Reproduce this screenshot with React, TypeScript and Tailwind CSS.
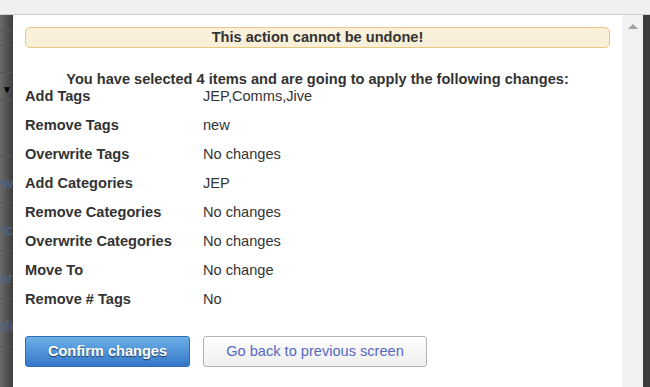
import React from "react";

const rows = [
  { label: "Add Tags", value: "JEP,Comms,Jive" },
  { label: "Remove Tags", value: "new" },
  { label: "Overwrite Tags", value: "No changes" },
  { label: "Add Categories", value: "JEP" },
  { label: "Remove Categories", value: "No changes" },
  { label: "Overwrite Categories", value: "No changes" },
  { label: "Move To", value: "No change" },
  { label: "Remove # Tags", value: "No" },
];

// slices of the page that peek out behind the dialog
const behind = [
  { h: "h-[16px]", text: "" },
  { h: "h-[15px]", text: "" },
  { h: "h-[27px]", text: "" },
  { h: "h-[28px]", text: "▼" },
  { h: "h-[56px]", text: "" },
  { h: "h-[46px]", text: "ew" },
  { h: "h-[48px]", text: "nc" },
  { h: "h-[48px]", text: "ar" },
  { h: "h-[48px]", text: "oli" },
];

const App = () => {
  return (
    <div
      className="w-[650px] h-[387px] overflow-hidden flex flex-col bg-[#f0f0f0] text-[#333333]"
      style={{ fontFamily: '"Liberation Sans", Arial, sans-serif' }}
    >
      {/* page top strip */}
      <div className="h-[15px] shrink-0 bg-[#f0f0f0] border-b border-[#cfcfcf]" />

      <div className="flex flex-1 min-h-0">
        {/* dimmed page behind the dialog */}
        <div className="w-[13px] shrink-0 overflow-hidden flex flex-col bg-gradient-to-r from-[#6b6b6b] to-[#3e3e3e] text-[15px] text-[#4d6590]">
          {behind.map((b, i) => (
            <div
              key={i}
              className={`${b.h} shrink-0 border-b border-[#555] flex items-center justify-end whitespace-nowrap`}
            >
              {b.text === "▼" ? (
                <span className="text-[10px] text-black pr-[1px] pt-[5px]">▼</span>
              ) : (
                <span className="pt-[8px]">{b.text}</span>
              )}
            </div>
          ))}
        </div>

        {/* dialog */}
        <div className="flex-1 flex bg-white rounded-tl-[7px] min-w-0">
          <div className="flex-1 px-[12px] pt-[12px] text-[14.6px]">
            <div className="h-[21px] flex items-center justify-center rounded-[5px] border border-[#e9c77f] bg-[#f8f0d9] font-bold">
              This action cannot be undone!
            </div>

            <div className="mt-[23px] mb-[1px] leading-[16px] text-center font-bold">
              You have selected 4 items and are going to apply the following changes:
            </div>

            <div className="flex flex-col gap-[13px]">
              {rows.map((r) => (
                <div key={r.label} className="flex leading-[16px]">
                  <div className="w-[178px] shrink-0 font-bold">{r.label}</div>
                  <div>{r.value}</div>
                </div>
              ))}
            </div>

            <div className="mt-[29px] flex gap-[13px]">
              <button
                className="w-[165px] h-[31px] rounded-[3px] border border-[#2f6ab3] bg-gradient-to-b from-[#6cb0e7] to-[#3577c8] text-white font-bold"
                style={{ textShadow: "0 1px 1px rgba(0,0,0,0.6)" }}
              >
                Confirm changes
              </button>
              <button className="w-[224px] h-[31px] rounded-[3px] border border-[#b3b3b3] bg-gradient-to-b from-white to-[#eeeeee] text-[#5668c6]">
                Go back to previous screen
              </button>
            </div>
          </div>

          {/* scrollbar */}
          <div className="w-[21px] shrink-0 bg-[#f1f1f1] flex justify-center pt-[9px]">
            <div className="w-0 h-0 border-l-[5px] border-r-[5px] border-b-[5px] border-l-transparent border-r-transparent border-b-[#a3a3a3]" />
          </div>
        </div>

        <div className="w-[7px] shrink-0 bg-[#3d3d3d]" />
      </div>
    </div>
  );
};

export default App;
